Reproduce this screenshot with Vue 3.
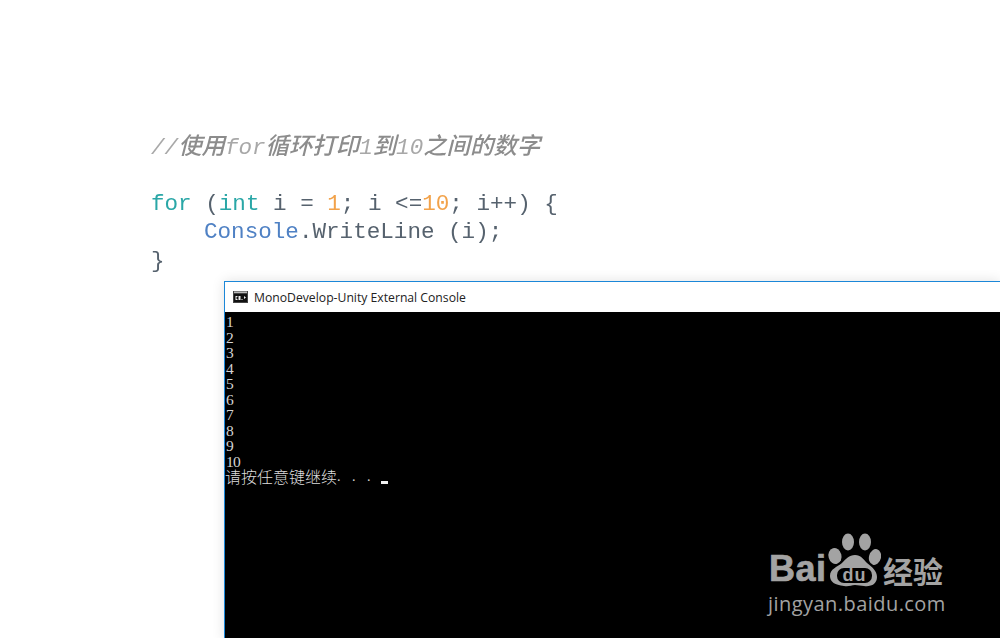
<script setup>
const outputLines = ['1','2','3','4','5','6','7','8','9','10']
</script>

<template>
  <div class="page">
    <div class="code">
      <div class="comment"><span>//</span><span class="cjk">使用</span><span>for</span><span class="cjk">循环打印</span><span>1</span><span class="cjk">到</span><span>10</span><span class="cjk">之间的数字</span></div>
      <div class="gap"></div>
      <div class="line"><span class="kw">for</span> (<span class="kw">int</span> i = <span class="num">1</span>; i &lt;=<span class="num">10</span>; i++) {</div>
      <div class="line indent"><span class="type">Console</span>.WriteLine (i);</div>
      <div class="line">}</div>
    </div>
    <div class="window">
      <div class="titlebar">
        <svg class="appicon" width="15" height="12" viewBox="0 0 15 12">
          <rect width="15" height="12" fill="#444"/>
          <rect x="1" y="0.500" width="13" height="1.500" fill="#bbb"/>
          <rect x="1" y="3" width="13" height="8" fill="#111"/>
          <path d="M2.500 5h2v1h-1v2h1v1h-2zM5.500 5h2v4h-2zM8.500 8h1v1h-1zM11 5l2 1.500-2 1.500z" fill="#eee"/>
        </svg>
        <span class="title">MonoDevelop-Unity External Console</span>
      </div>
      <div class="console">
        <div v-for="l in outputLines" :key="l" class="out">{{ l }}</div>
        <div class="out prompt"><span class="zh">请按任意键继续</span><span class="dots">. . .</span><span class="cursor"></span></div>
      </div>
    </div>
    <div class="mark">
      <div class="logo">
        <span class="bai">Bai</span>
        <svg class="paw" width="56" height="60" viewBox="0 0 56 60">
          <ellipse cx="10" cy="26" rx="6.500" ry="8" fill="#a3a3a3" transform="rotate(-15 10 26)"/>
          <ellipse cx="23" cy="12" rx="6" ry="8.500" fill="#a3a3a3"/>
          <ellipse cx="40" cy="12" rx="6" ry="8.500" fill="#a3a3a3"/>
          <ellipse cx="50" cy="27" rx="6" ry="8" fill="#a3a3a3" transform="rotate(15 50 27)"/>
          <path d="M30 25c6 0 8 4 12 8 5 4 10 8 10 14 0 7-6 10-13 9-3 0-6-1-9-1-4 0-6 2-11 1-9-1-14-4-14-10 0-7 7-9 12-13 4-4 7-8 13-8z" fill="#a3a3a3"/>
          <rect x="12" y="38" width="35" height="15" rx="7" fill="#000"/>
          <text x="29.500" y="51" text-anchor="middle" class="du">du</text>
        </svg>
        <span class="jy">经验</span>
      </div>
      <div class="url">jingyan.baidu.com</div>
    </div>
  </div>
</template>

<style scoped>
.page {
  position: relative;
  width: 1000px;
  height: 638px;
  overflow: hidden;
  background: #fff;
}
.code {
  padding: 130px 0 0 151px;
  height: 151px;
  font-family: "Liberation Mono", monospace;
  font-size: 22.6px;
  line-height: 28.5px;
  color: #56626e;
  white-space: pre;
  filter: blur(0.35px);
}
.comment {
  font-style: italic;
  color: #a8a8a8;
}
.cjk {
  font-family: "Noto Sans CJK SC", sans-serif;
  font-size: 23.4px;
  font-weight: 500;
  color: #8c8c8c;
}
.gap { height: 27px; }
.indent { padding-left: 53px; }
.kw { color: #2aa7a7; }
.num { color: #f2a24a; }
.type { color: #4f81c4; }
.window {
  margin-left: 224px;
  height: 357px;
  border: 1px solid #1b87d8;
  border-right: 0;
  box-shadow: 0 0 12px rgba(0, 0, 0, 0.12);
  display: flex;
  flex-direction: column;
  background: #fff;
}
.titlebar {
  height: 30px;
  display: flex;
  align-items: center;
  gap: 6px;
  padding-left: 8px;
  flex: none;
}
.title {
  font-family: "Open Sans", sans-serif;
  font-size: 12.2px;
  color: #222;
}
.console {
  flex: 1;
  background: #000;
  color: #d4d4d4;
  font-family: "Liberation Serif", serif;
  font-size: 15.5px;
  letter-spacing: -0.7px;
  line-height: 15.55px;
  padding: 2px 0 0 1px;
}
.out { height: 15.55px; }
.prompt {
  display: flex;
  align-items: center;
  letter-spacing: 0;
  font-size: 14px;
}
.zh {
  font-family: "Noto Sans CJK SC", sans-serif;
  font-size: 16px;
  font-weight: 300;
  line-height: 15.55px;
  margin-left: -1px;
  color: #dcdcdc;
}
.dots {
  word-spacing: 8px;
  width: 44px;
  flex: none;
}
.cursor {
  width: 7px;
  height: 3px;
  background: #f0f0f0;
  margin-top: 10px;
}
.mark {
  position: absolute;
  left: 768px;
  top: 530px;
  width: 180px;
  color: #a3a3a3;
}
.logo {
  display: flex;
  align-items: flex-end;
  height: 58px;
  position: relative;
}
.bai {
  font-family: "Liberation Sans", sans-serif;
  font-weight: 700;
  font-size: 36px;
  line-height: 36px;
  margin-left: 1px;
  margin-bottom: 1px;
  -webkit-text-stroke: 0.7px #a3a3a3;
  letter-spacing: 0.5px;
}
.paw {
  position: absolute;
  left: 57px;
  top: 0;
}
.du {
  font-family: "Liberation Sans", sans-serif;
  font-weight: 700;
  font-size: 18px;
  letter-spacing: 1px;
  fill: #a3a3a3;
}
.jy {
  position: absolute;
  left: 115px;
  top: 24px;
  font-family: "Noto Sans CJK SC", sans-serif;
  font-weight: 700;
  font-size: 30px;
  line-height: 32px;
}
.url {
  font-family: "Open Sans", sans-serif;
  font-size: 20px;
  line-height: 24px;
  margin-top: 4px;
  letter-spacing: 0.45px;
  white-space: nowrap;
}
</style>
